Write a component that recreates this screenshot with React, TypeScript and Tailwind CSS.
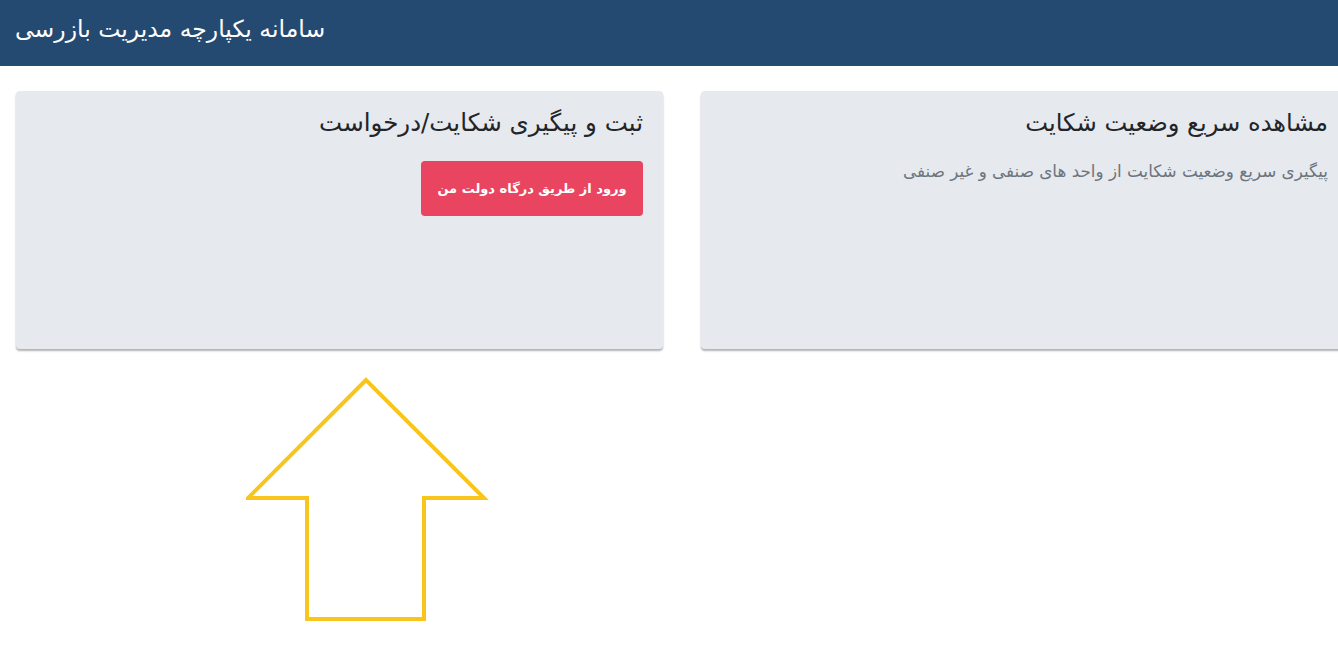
import React from 'react';

const ArrowUp: React.FC = () => (
  <svg width="250" height="252" viewBox="0 0 250 252" className="block">
    <polygon
      points="120,10 2,128 61,128 61,249 178,249 178,128 238,128"
      fill="none"
      stroke="#f9c51c"
      strokeWidth="4"
      strokeLinejoin="miter"
    />
  </svg>
);

const App: React.FC = () => {
  return (
    <div className="w-[1338px] h-[655px] overflow-hidden bg-white relative" style={{ fontFamily: '"DejaVu Sans", sans-serif' }}>
      {/* هدر */}
      <div className="h-[66px] bg-[#254a71] flex items-center px-[15px]">
        <h1 dir="rtl" className="text-white text-[23.5px] leading-none pb-[7px]">سامانه یکپارچه مدیریت بازرسی</h1>
      </div>

      {/* کارت ها */}
      <div className="grid grid-cols-[647px_647px] gap-[38px] pl-4 pt-[25px]">
        <div dir="rtl" className="h-[258px] bg-[#e6e9ee] rounded shadow-[0_2px_2px_rgba(0,0,0,0.3)] px-5 pt-[14px]">
          <h2 className="text-[24.5px] text-[#212529] leading-[36px]">ثبت و پیگیری شکایت/درخواست</h2>
          <button className="mt-[20px] w-[222px] h-[55px] bg-[#ea4560] text-white font-bold text-[13px] rounded">
            ورود از طریق درگاه دولت من
          </button>
        </div>
        <div dir="rtl" className="h-[258px] bg-[#e6e9ee] rounded shadow-[0_2px_2px_rgba(0,0,0,0.3)] px-5 pt-[14px]">
          <h2 className="text-[24.2px] text-[#212529] leading-[36px]">مشاهده سریع وضعیت شکایت</h2>
          <p className="mt-[18px] text-[16.8px] text-[#6c757d]">پیگیری سریع وضعیت شکایت از واحد های صنفی و غیر صنفی</p>
        </div>
      </div>

      {/* فلش راهنما */}
      <div className="absolute left-[246px] top-[370px]">
        <ArrowUp />
      </div>
    </div>
  );
};

export default App;
